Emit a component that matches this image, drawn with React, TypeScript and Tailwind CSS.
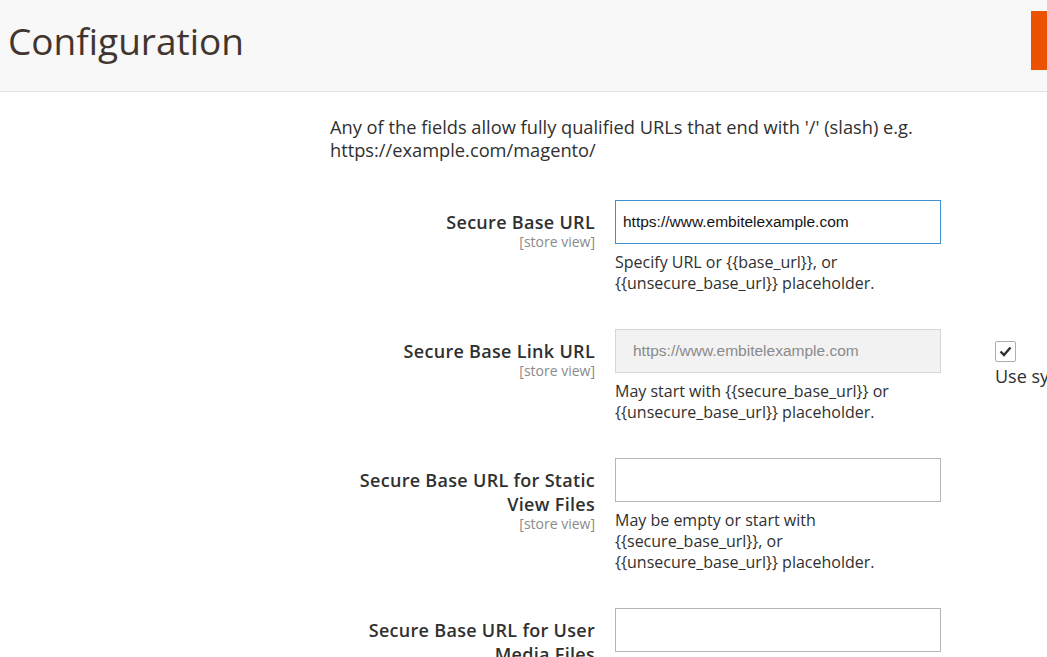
import React from 'react';

type Row = {
  label: string[];
  value?: string;
  focused?: boolean;
  disabled?: boolean;
  note?: string[];
  useSystem?: boolean;
};

const rows: Row[] = [
  {
    label: ['Secure Base URL'],
    value: 'https://www.embitelexample.com',
    focused: true,
    note: ['Specify URL or {{base_url}}, or', '{{unsecure_base_url}} placeholder.'],
  },
  {
    label: ['Secure Base Link URL'],
    value: 'https://www.embitelexample.com',
    disabled: true,
    note: ['May start with {{secure_base_url}} or', '{{unsecure_base_url}} placeholder.'],
    useSystem: true,
  },
  {
    label: ['Secure Base URL for Static', 'View Files'],
    note: ['May be empty or start with', '{{secure_base_url}}, or', '{{unsecure_base_url}} placeholder.'],
  },
  {
    label: ['Secure Base URL for User', 'Media Files'],
    note: ['May be empty or start with', '{{secure_base_url}}, or', '{{unsecure_base_url}} placeholder.'],
  },
];

const sans = "font-['Open_Sans',sans-serif]";

function FieldRow({ row }: { row: Row }) {
  const inputCls = row.disabled
    ? 'border-[#d6d6d6] bg-[#f2f2f2] text-[#8a8a8a] pl-[17px]'
    : row.focused
      ? 'border-[#3c8fd0] bg-white text-[#141414] pl-[7px]'
      : 'border-[#b5b5b5] bg-white text-[#141414] pl-[7px]';

  return (
    <div className="flex items-start">
      <div className="w-[265px] shrink-0 pt-[10px] text-right">
        {row.label.map((l) => (
          <div
            key={l}
            className="whitespace-nowrap text-[18px] leading-[24px] font-semibold tracking-[0.3px] text-[#303030]"
          >
            {l}
          </div>
        ))}
        <div className="text-[14px] leading-[16px] text-[#8a8a8a]">[store view]</div>
      </div>
      <div className="ml-[20px] w-[326px] shrink-0">
        <div
          className={`flex h-[44px] items-center border font-['Liberation_Sans',Arial,sans-serif] text-[15.5px] ${inputCls}`}
        >
          {row.value}
        </div>
        {row.note && (
          <div className="mt-[8px] text-[16px] leading-[21px] text-[#303030]">
            {row.note.map((n) => (
              <div key={n}>{n}</div>
            ))}
          </div>
        )}
      </div>
      {row.useSystem && (
        <div className="ml-[54px] pt-[12px] whitespace-nowrap">
          <div className="flex h-[21px] w-[21px] items-center justify-center rounded-[2px] border border-[#adadad] bg-white">
            <svg width="13" height="11" viewBox="0 0 13 11">
              <path d="M1.5 5.5 L5 9 L11.5 1.5" fill="none" stroke="#303030" strokeWidth="2.4" />
            </svg>
          </div>
          <div className="mt-[2px] text-[18px] leading-[24px] text-[#303030]">Use system value</div>
        </div>
      )}
    </div>
  );
}

export default function App() {
  return (
    <div className={`h-[657px] w-full overflow-hidden bg-white ${sans}`}>
      <header className="flex h-[92px] items-start border-b border-[#e3e3e3] bg-[#f8f8f8]">
        <h1 className="ml-[8px] mt-[17px] text-[37px] leading-[48px] font-normal text-[#41362f]">
          Configuration
        </h1>
        <button className="ml-auto mr-[-120px] mt-[11px] h-[59px] w-[136px] bg-[#eb5202] text-white">
          Save Config
        </button>
      </header>

      <div className="pt-[23px]">
        <p className="ml-[330px] w-[660px] text-[18.25px] leading-[23px] text-[#303030]">
          Any of the fields allow fully qualified URLs that end with '/' (slash) e.g.
          <br />
          https://example.com/magento/
        </p>
        <div className="mt-[39px] flex flex-col gap-[35px] pl-[330px]">
          {rows.map((r) => (
            <FieldRow key={r.label.join(' ')} row={r} />
          ))}
        </div>
      </div>
    </div>
  );
}
